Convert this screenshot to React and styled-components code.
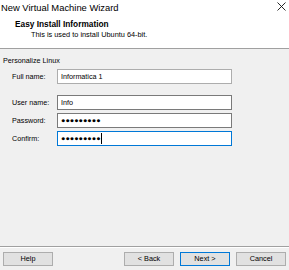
import React from "react";
import styled, { createGlobalStyle } from "styled-components";

const Global = createGlobalStyle`
  html, body { margin: 0; padding: 0; background: #f0f0f0; }
  * { box-sizing: border-box; }
`;

const Window = styled.div`
  width: 289px;
  height: 270px;
  display: flex;
  flex-direction: column;
  overflow: hidden;
  background: #f0f0f0;
  font-family: "Liberation Sans", Arial, sans-serif;
  color: #000;
`;

const TitleBar = styled.div`
  height: 17px;
  flex: none;
  background: #fff;
  display: flex;
  align-items: flex-start;
  justify-content: space-between;
  padding: 2px 3px 0 1px;
`;

const TitleText = styled.div`
  font-size: 9.4px;
  line-height: 12px;
  white-space: nowrap;
`;

const CloseButton = styled.div`
  width: 9px;
  height: 9px;
  margin-top: 0px;
  display: flex;
`;

const Header = styled.div`
  height: 32px;
  flex: none;
  background: #fff;
  border-bottom: 1px solid #a0a0a0;
  padding: 2px 0 0 15px;
  display: flex;
  flex-direction: column;
`;

const HeaderTitle = styled.div`
  font-size: 8.3px;
  font-weight: 700;
  line-height: 11px;
  white-space: nowrap;
`;

const HeaderSub = styled.div`
  font-size: 7.35px;
  line-height: 10px;
  padding-left: 16px;
  white-space: nowrap;
`;

const Body = styled.div`
  flex: 1;
  padding: 7px 0 0 3px;
  display: flex;
  flex-direction: column;
`;

const GroupLabel = styled.div`
  font-size: 7.2px;
  line-height: 10px;
  white-space: nowrap;
`;

const Form = styled.div`
  margin-top: 3px;
  padding-left: 9px;
  display: grid;
  grid-template-columns: 45px 175px;
  row-gap: 3px;
`;

const Label = styled.div`
  font-size: 7.2px;
  line-height: 15px;
  white-space: nowrap;
  margin-top: ${(p) => p.$gap || 0}px;
`;

const TextBox = styled.div`
  height: 15px;
  background: #fff;
  border: 1px solid ${(p) => (p.$focused ? "#0078d7" : p.$light ? "#adadad" : "#7a7a7a")};
  padding-left: 3px;
  font-size: 7.2px;
  line-height: 13px;
  white-space: nowrap;
  display: flex;
  align-items: center;
  margin-top: ${(p) => p.$gap || 0}px;
`;

const Dots = styled.span`
  font-size: 7.2px;
  letter-spacing: 0.05px;
`;

const Caret = styled.span`
  display: inline-block;
  width: 1px;
  height: 11px;
  background: #000;
  margin-left: 0px;
`;

const Footer = styled.div`
  height: 24px;
  flex: none;
  border-top: 1px solid #a0a0a0;
  box-shadow: inset 0 1px 0 #fff;
  padding: 5px 3px 0 3px;
  display: flex;
  justify-content: space-between;
  align-items: flex-start;
`;

const ButtonGroup = styled.div`
  display: flex;
  gap: 6px;
`;

const Button = styled.div`
  width: 50px;
  height: 14px;
  background: #e1e1e1;
  border: 1px solid ${(p) => (p.$default ? "#0078d7" : "#adadad")};
  font-size: 7.3px;
  line-height: 12px;
  text-align: center;
  white-space: nowrap;
`;

const CloseIcon = () => (
  <svg width="9" height="9" viewBox="0 0 9 9">
    <path d="M0.5 0.5 L8.5 8.5 M8.5 0.5 L0.5 8.5" stroke="#111" strokeWidth="0.9" fill="none" />
  </svg>
);

export default function App() {
  return (
    <>
      <Global />
      <Window>
        <TitleBar>
          <TitleText>New Virtual Machine Wizard</TitleText>
          <CloseButton>
            <CloseIcon />
          </CloseButton>
        </TitleBar>
        <Header>
          <HeaderTitle>Easy Install Information</HeaderTitle>
          <HeaderSub>This is used to install Ubuntu 64-bit.</HeaderSub>
        </Header>
        <Body>
          <GroupLabel>Personalize Linux</GroupLabel>
          <Form>
            <Label>Full name:</Label>
            <TextBox $light>Informatica 1</TextBox>
            <Label $gap={8}>User name:</Label>
            <TextBox $gap={8}>Info</TextBox>
            <Label>Password:</Label>
            <TextBox>
              <Dots>●●●●●●●●●</Dots>
            </TextBox>
            <Label>Confirm:</Label>
            <TextBox $focused>
              <Dots>●●●●●●●●●</Dots>
              <Caret />
            </TextBox>
          </Form>
        </Body>
        <Footer>
          <Button>Help</Button>
          <ButtonGroup>
            <Button>&lt; Back</Button>
            <Button $default>Next &gt;</Button>
            <Button>Cancel</Button>
          </ButtonGroup>
        </Footer>
      </Window>
    </>
  );
}
